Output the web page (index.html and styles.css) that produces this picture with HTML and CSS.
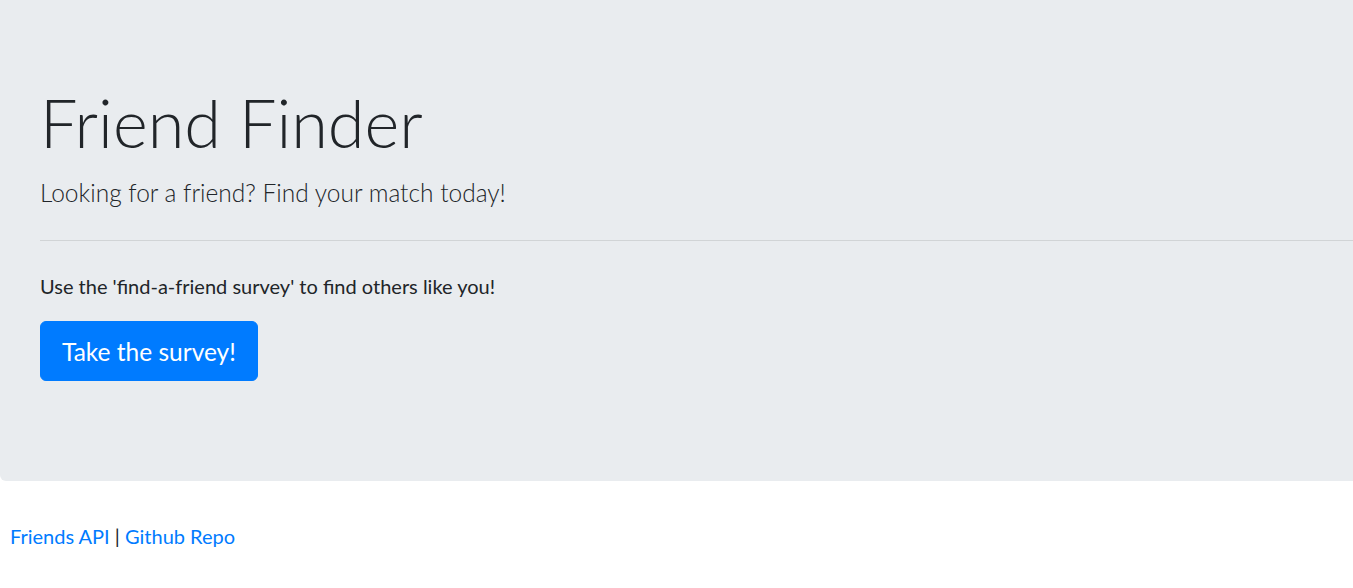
FILE: index.html
```html
<!DOCTYPE html>
<html>
<head>
<meta charset="utf-8">
<title>Friend Finder</title>
<link rel="stylesheet" href="styles.css">
</head>
<body>
<div class="jumbotron">
  <h1 class="display">Friend Finder</h1>
  <p class="lead">Looking for a friend? Find your match today!</p>
  <hr class="divider">
  <p class="intro">Use the 'find-a-friend survey' to find others like you!</p>
  <p class="lead action"><a class="btn" href="#">Take the survey!</a></p>
</div>
<footer class="footer">
  <a class="link" href="#">Friends API</a> | <a class="link" href="#">Github Repo</a>
</footer>
</body>
</html>
```
FILE: styles.css
```css
html, body {
  margin: 0;
  padding: 0;
  overflow: hidden;
}
body {
  font-family: Lato, "Liberation Sans", sans-serif;
  font-size: 20px;
  line-height: 30px;
  color: #212529;
  background: #fff;
}
.jumbotron {
  background: #e9ecef;
  padding: 80px 0 80px 40px;
  border-radius: 0 0 0 6px;
  margin-bottom: 40px;
}
.display {
  margin: 0 0 10px;
  font-size: 66.6px;
  font-weight: 300;
  line-height: 84px;
}
.lead {
  margin: 0 0 20px;
  font-size: 24.5px;
  font-weight: 300;
  line-height: 37.5px;
}
.divider {
  margin: 28px 0 30px;
  border: 0;
  border-top: 1px solid rgba(0, 0, 0, 0.1);
  height: 0;
}
.intro {
  margin: 0 0 20px;
}
.action {
  margin-bottom: 20px;
  line-height: 0;
}
.btn {
  display: inline-block;
  box-sizing: border-box;
  height: 60px;
  padding: 2px 21px 0;
  line-height: 56px;
  font-size: 24.5px;
  font-weight: 400;
  color: #fff;
  background: #007bff;
  border: 1px solid #007bff;
  border-radius: 6px;
  text-decoration: none;
}
.footer {
  padding-left: 10px;
}
.link {
  color: #007bff;
  text-decoration: none;
}
```
